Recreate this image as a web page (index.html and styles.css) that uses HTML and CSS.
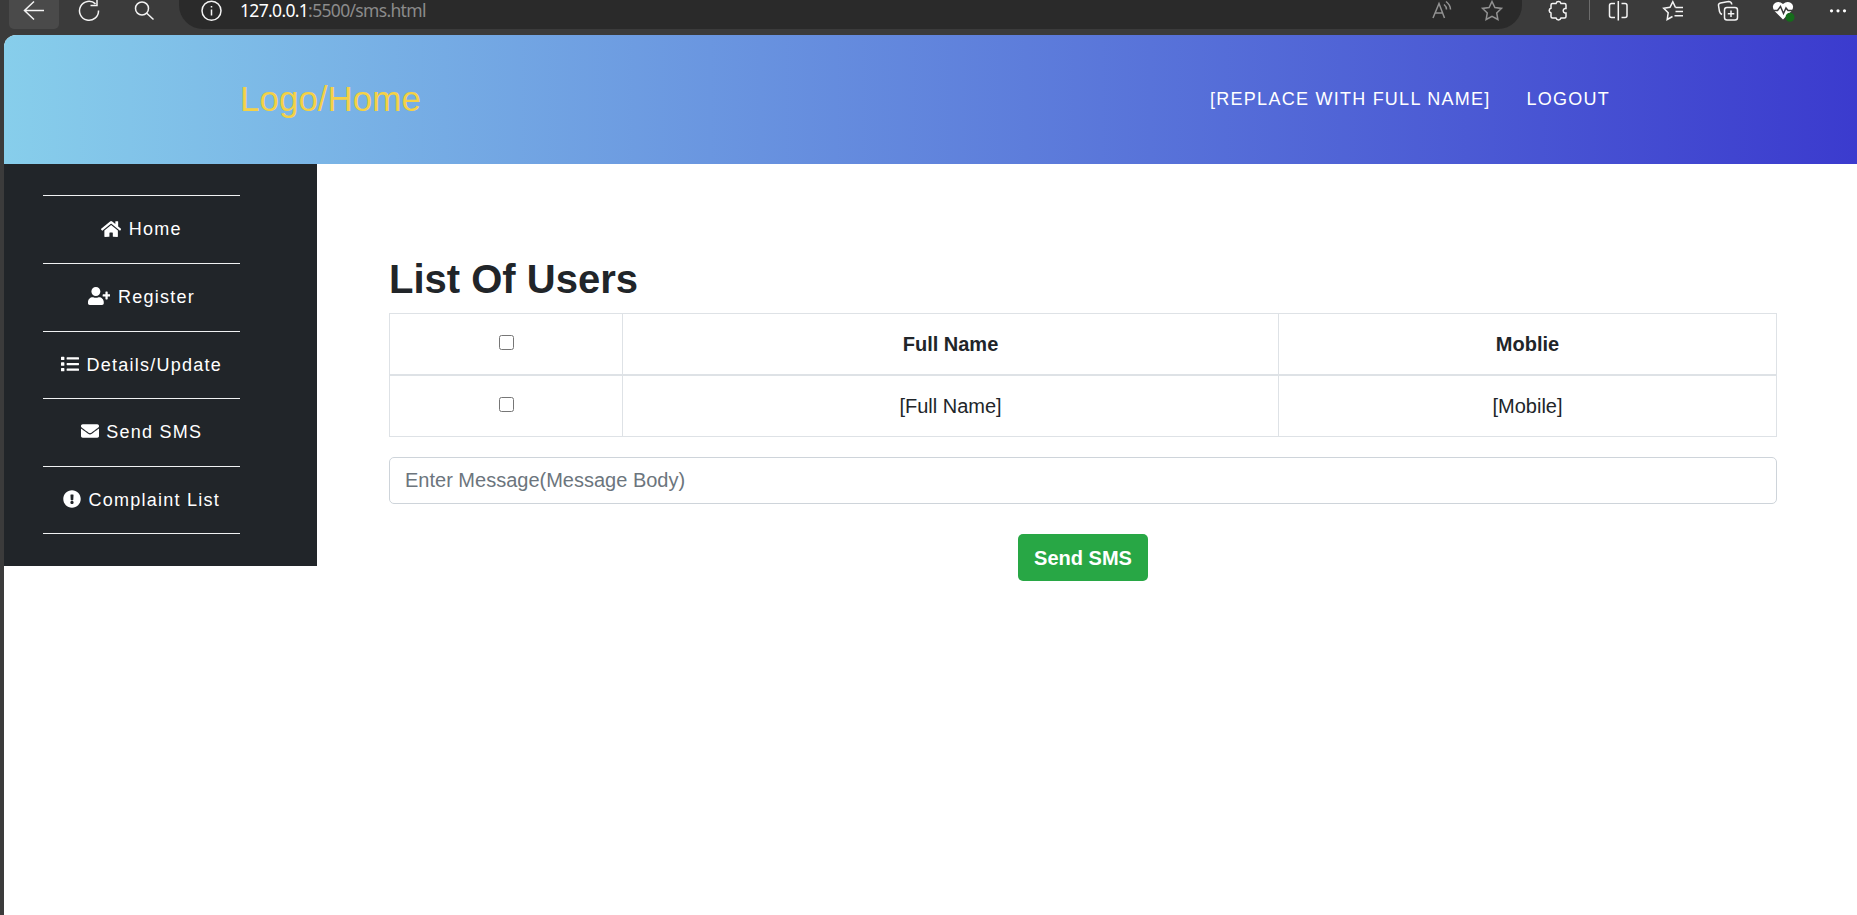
FILE: index.html
```html
<!DOCTYPE html>
<html lang="en">
<head>
<meta charset="utf-8">
<title>Send SMS</title>
<link rel="stylesheet" href="styles.css">
</head>
<body>
<div class="browser-bar">
  <span class="tool back"><svg width="24" height="24" viewBox="0 0 24 24"><path d="M22 10.500H3M12 1.500L2.500 10.500L12 19.500"/></svg></span>
  <span class="tool reload"><svg width="24" height="24" viewBox="0 0 24 24"><path d="M18.500 3.900A9.500 9.500 0 1 0 21.500 10.500M20 -1V5.500H13.500"/></svg></span>
  <span class="tool search"><svg width="24" height="24" viewBox="0 0 24 24"><circle cx="10" cy="8.500" r="6.500"/><path d="M14.800 13.300L21.500 19.500"/></svg></span>
  <div class="address">
    <svg class="info" width="24" height="24" viewBox="0 0 24 24"><circle cx="12.500" cy="10.700" r="9.500"/><path d="M12.500 9.500V15.500M12.500 6V7.500"/></svg>
    <span class="url"><b>127.0.0.1</b>:5500/sms.html</span>
    <svg class="dim read" width="24" height="24" viewBox="0 0 24 24"><path d="M3 18L9 3.500L14.500 18M5 13H13M14 4.500Q16.500 6.500 16.500 9.500M16 1.500Q20.500 5 20.500 9.500"/></svg>
    <svg class="dim star" width="24" height="24" viewBox="0 0 24 24"><path d="M12 1.500L14.900 7.500L21.500 8.400L16.700 13L17.900 19.500L12 16.400L6.100 19.500L7.300 13L2.500 8.400L9.100 7.500Z"/></svg>
  </div>
  <div class="actions">
    <svg width="24" height="24" viewBox="0 0 24 24"><path d="M6.500 3.500H10A2.600 2.600 0 0 1 15 3.500H18.500Q20 3.500 20 5V8.500H19A2.300 2.300 0 0 0 19 13H20V16.500Q20 18 18.500 18H15A2.600 2.600 0 0 1 10 18H6.500Q5 18 5 16.500V13A2.500 2.500 0 0 1 5 8.200V5Q5 3.500 6.500 3.500Z"/></svg>
    <i class="divider"></i>
    <svg class="split" width="24" height="24" viewBox="0 0 24 24"><path d="M9 3.500H5.500Q3.500 3.500 3.500 5.500V15.500Q3.500 17.500 5.500 17.500H9M15.500 3.500H19Q21 3.500 21 5.500V15.500Q21 17.500 19 17.500H15.500M12.300 1V20.500"/></svg>
    <svg width="24" height="24" viewBox="0 0 24 24"><path d="M14.500 7.500L11.800 1.800L9 7.300L2.700 8.200L7.200 12.700L6.200 19.500L11.500 16.500M14.500 11.500H22M13.500 15.800H22M14.500 7.500H22"/></svg>
    <svg width="24" height="24" viewBox="0 0 24 24"><rect x="8.500" y="7.500" width="13" height="12.500" rx="2.500"/><path d="M15 10.500V17M11.800 13.700H18.300M6 14.500Q4 13.500 3.500 11.500L2.500 5.500Q2.300 3.500 4.500 3L12.500 1.500Q15.500 1.500 15.800 4.500"/></svg>
    <svg class="health" width="24" height="24" viewBox="0 0 24 24"><path class="solid" d="M12 19.500L3.500 11Q0 6 4 3Q8 .500 12 4Q16 .500 20 3Q24 6 20.500 11Z"/><path class="pulse" d="M1 10.500H6.500L9.500 6.500L12.500 13.500L15 8L17 10.500H23"/><circle class="status" cx="19" cy="17.300" r="4.500"/></svg>
    <svg class="more" width="24" height="24" viewBox="0 0 24 24"><circle cx="5.500" cy="10.800" r="1.600"/><circle cx="12" cy="10.800" r="1.600"/><circle cx="18.500" cy="10.800" r="1.600"/></svg>
  </div>
</div>
<div class="page">
  <header class="header">
    <a class="logo">Logo/Home</a>
    <nav class="links"><a>[REPLACE WITH FULL NAME]</a><a>LOGOUT</a></nav>
  </header>
  <div class="columns">
    <aside class="sidebar">
      <ul class="menu">
        <li><svg class="fa fa-home" viewBox="0 0 576 512"><path d="M280.370 148.260L96 300.110V464a16 16 0 0 0 16 16l112.060-.290a16 16 0 0 0 15.920-16V368a16 16 0 0 1 16-16h64a16 16 0 0 1 16 16v95.640a16 16 0 0 0 16 16.050L464 480a16 16 0 0 0 16-16V300L295.670 148.260a12.190 12.190 0 0 0-15.300 0zM571.600 251.470L488 182.560V44.050a12 12 0 0 0-12-12h-56a12 12 0 0 0-12 12v72.610L318.470 43a48 48 0 0 0-61 0L4.340 251.470a12 12 0 0 0-1.600 16.900l25.500 31A12 12 0 0 0 45.150 301l235.220-193.740a12.190 12.190 0 0 1 15.300 0L530.900 301a12 12 0 0 0 16.900-1.600l25.500-31a12 12 0 0 0-1.700-16.930z"/></svg> Home</li>
        <li><svg class="fa fa-user-plus" viewBox="0 0 640 512"><path d="M624 208h-64v-64c0-8.800-7.200-16-16-16h-32c-8.800 0-16 7.200-16 16v64h-64c-8.800 0-16 7.200-16 16v32c0 8.800 7.200 16 16 16h64v64c0 8.800 7.200 16 16 16h32c8.800 0 16-7.200 16-16v-64h64c8.800 0 16-7.200 16-16v-32c0-8.800-7.200-16-16-16zm-400 48c70.700 0 128-57.300 128-128S294.700 0 224 0 96 57.300 96 128s57.300 128 128 128zm89.600 32h-16.700c-22.200 10.200-46.900 16-72.900 16s-50.600-5.800-72.900-16h-16.700C60.200 288 0 348.200 0 422.400V464c0 26.500 21.500 48 48 48h352c26.500 0 48-21.500 48-48v-41.600c0-74.200-60.200-134.400-134.400-134.400z"/></svg> Register</li>
        <li><svg class="fa" viewBox="0 0 512 512"><path d="M80 368H16a16 16 0 0 0-16 16v64a16 16 0 0 0 16 16h64a16 16 0 0 0 16-16v-64a16 16 0 0 0-16-16zm0-320H16A16 16 0 0 0 0 64v64a16 16 0 0 0 16 16h64a16 16 0 0 0 16-16V64a16 16 0 0 0-16-16zm0 160H16a16 16 0 0 0-16 16v64a16 16 0 0 0 16 16h64a16 16 0 0 0 16-16v-64a16 16 0 0 0-16-16zm416 176H176a16 16 0 0 0-16 16v32a16 16 0 0 0 16 16h320a16 16 0 0 0 16-16v-32a16 16 0 0 0-16-16zm0-320H176a16 16 0 0 0-16 16v32a16 16 0 0 0 16 16h320a16 16 0 0 0 16-16V80a16 16 0 0 0-16-16zm0 160H176a16 16 0 0 0-16 16v32a16 16 0 0 0 16 16h320a16 16 0 0 0 16-16v-32a16 16 0 0 0-16-16z"/></svg> Details/Update</li>
        <li><svg class="fa" viewBox="0 0 512 512"><path d="M502.300 190.800c3.900-3.100 9.700-.200 9.700 4.700V400c0 26.500-21.500 48-48 48H48c-26.500 0-48-21.500-48-48V195.600c0-5 5.700-7.800 9.700-4.700 22.400 17.400 52.100 39.500 154.100 113.600 21.100 15.400 56.700 47.800 92.200 47.600 35.700.300 72-32.800 92.300-47.600 102-74.100 131.600-96.300 154-113.700zM256 320c23.200.400 56.600-29.200 73.400-41.400 132.700-96.300 142.800-104.700 173.400-128.700 5.800-4.500 9.200-11.500 9.200-18.900v-19c0-26.500-21.500-48-48-48H48c-26.500 0-48 21.500-48 48v19c0 7.400 3.400 14.300 9.200 18.900 30.600 23.900 40.700 32.400 173.400 128.700 16.800 12.200 50.200 41.800 73.400 41.400z"/></svg> Send SMS</li>
        <li><svg class="fa" viewBox="0 0 512 512"><path d="M504 256c0 136.997-111.043 248-248 248S8 392.997 8 256C8 119.083 119.043 8 256 8s248 111.083 248 248zm-248 50c-25.405 0-46 20.595-46 46s20.595 46 46 46 46-20.595 46-46-20.595-46-46-46zm-43.673-165.346l7.418 136c.347 6.364 5.609 11.346 11.982 11.346h48.546c6.373 0 11.635-4.982 11.982-11.346l7.418-136c.375-6.874-5.098-12.654-11.982-12.654h-63.383c-6.884 0-12.356 5.780-11.981 12.654z"/></svg> Complaint List</li>
      </ul>
    </aside>
    <main class="content">
      <h2>List Of Users</h2>
      <table class="users">
        <colgroup><col class="col-check"><col class="col-name"><col></colgroup>
        <thead><tr><th><input type="checkbox"></th><th>Full Name</th><th>Moblie</th></tr></thead>
        <tbody><tr><td><input type="checkbox"></td><td>[Full Name]</td><td>[Mobile]</td></tr></tbody>
      </table>
      <input class="message" type="text" placeholder="Enter Message(Message Body)">
      <button class="send">Send SMS</button>
    </main>
  </div>
</div>
</body>
</html>
```
FILE: styles.css
```css
* { box-sizing: border-box; }
body {
  margin: 0;
  height: 915px;
  overflow: hidden;
  background: #3b3b3b;
  color: #212529;
  font: 20px/30px "Liberation Sans", Arial, sans-serif;
}

/* Browser toolbar */
.browser-bar { display: flex; height: 35px; align-items: flex-start; padding-left: 9px; }
.browser-bar svg { display: block; flex: none; overflow: visible; fill: none; stroke: #f4f4f4; stroke-width: 1.5; }
.tool { display: flex; height: 29px; width: 50px; justify-content: center; margin-right: 5px; }
.back { background: #4a4a4a; border-radius: 0 0 5px 5px; }
.address {
  display: flex;
  width: 1343px;
  height: 29px;
  margin-left: 5px;
  padding: 0 18px 0 20px;
  background: #2a2a2a;
  border-radius: 0 0 24px 24px;
}
.url { margin-left: 17px; color: #8b8b8b; font: 17.5px/21px "Noto Sans", sans-serif; letter-spacing: -.67px; }
.url b { color: #fff; font-weight: 400; }
.browser-bar .dim { stroke: #929292; }
.read { margin-left: auto; }
.star { margin-left: 26px; }
.actions { display: flex; flex: 1; gap: 31px; padding-left: 24px; }
.divider { width: 1px; height: 20px; margin-left: -12px; background: #6c6c6c; }
.split { margin-left: -15px; }
.browser-bar .solid { fill: #fff; stroke: none; }
.browser-bar .pulse { stroke: #3b3b3b; }
.browser-bar .status { fill: #156c1b; stroke: none; }
.browser-bar .more { fill: #fff; stroke: none; }

/* Page */
.page { margin-left: 4px; height: 880px; background: #fff; border-radius: 12px 0 0 0; overflow: hidden; }
.header {
  display: flex;
  justify-content: space-between;
  align-items: center;
  height: 129px;
  padding: 0 247px 2px 236px;
  background: linear-gradient(to right, #87ceeb, #3b3bce);
}
.logo { color: #f4d146; font-size: 35px; }
.links { display: flex; gap: 36px; color: #fff; font-size: 18px; letter-spacing: 1.25px; }
.columns { display: flex; align-items: flex-start; }
.sidebar { width: 313px; height: 402px; padding: 31.4px 77px 0 39px; background: #212529; }
.menu {
  margin: 0;
  padding: 0;
  list-style: none;
  border-top: 1px solid #f0f2f3;
  color: #fff;
  font-size: 18px;
  letter-spacing: 1.25px;
  text-align: center;
}
.menu li { height: 67.6px; padding-top: 18px; border-bottom: 1px solid #f0f2f3; }
.fa { width: 18px; height: 18px; margin-right: 1.25px; fill: #fff; vertical-align: -2.25px; }
.fa-home { width: 20.25px; }
.fa-user-plus { width: 22.5px; }
.content { flex: 1; padding: 91px 80px 0 72px; }
h2 { margin: 0 0 10px; font-size: 40px; line-height: 48px; }
.users { width: 100%; table-layout: fixed; border-collapse: collapse; margin-bottom: 20px; text-align: center; }
.users th, .users td { height: 61.5px; padding: 15px; border: 1px solid #dee2e6; vertical-align: top; }
.users thead th { border-bottom-width: 2px; }
.col-check { width: 233px; }
.col-name { width: 656px; }
.users input { width: 15px; height: 15px; margin: 0; vertical-align: 1px; }
.message {
  display: block;
  width: 100%;
  height: 47px;
  padding: 0 15px;
  border: 1px solid #ced4da;
  border-radius: 5px;
  font: inherit;
}
.message::placeholder { color: #6c757d; opacity: 1; }
.send {
  display: block;
  width: 130px;
  height: 47px;
  margin: 30px auto 0;
  padding: 0;
  border: 0;
  border-radius: 5px;
  background: #28a745;
  color: #fff;
  font: inherit;
  font-weight: 700;
}
```
